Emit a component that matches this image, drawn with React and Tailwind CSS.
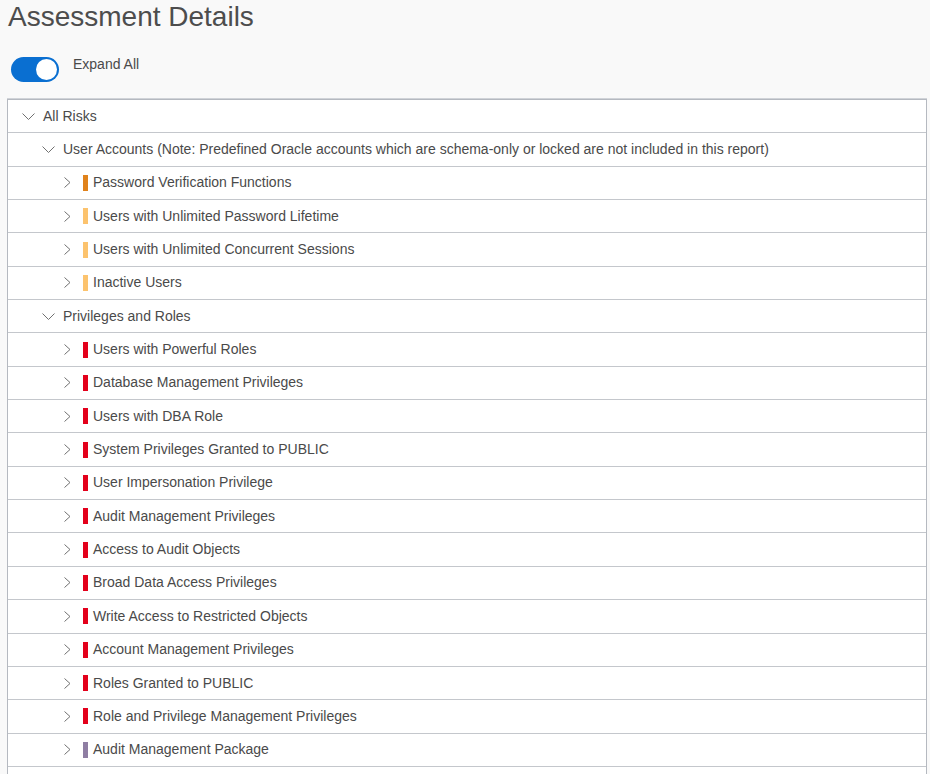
const ORANGE = "bg-[#e0821b]";
const LIGHT = "bg-[#fcc36e]";
const RED = "bg-[#e3001b]";
const PURPLE = "bg-[#8f7ea3]";

const TREE = [
  {
    label:
      "User Accounts (Note: Predefined Oracle accounts which are schema-only or locked are not included in this report)",
    items: [
      { label: "Password Verification Functions", color: ORANGE },
      { label: "Users with Unlimited Password Lifetime", color: LIGHT },
      { label: "Users with Unlimited Concurrent Sessions", color: LIGHT },
      { label: "Inactive Users", color: LIGHT },
    ],
  },
  {
    label: "Privileges and Roles",
    items: [
      { label: "Users with Powerful Roles", color: RED },
      { label: "Database Management Privileges", color: RED },
      { label: "Users with DBA Role", color: RED },
      { label: "System Privileges Granted to PUBLIC", color: RED },
      { label: "User Impersonation Privilege", color: RED },
      { label: "Audit Management Privileges", color: RED },
      { label: "Access to Audit Objects", color: RED },
      { label: "Broad Data Access Privileges", color: RED },
      { label: "Write Access to Restricted Objects", color: RED },
      { label: "Account Management Privileges", color: RED },
      { label: "Roles Granted to PUBLIC", color: RED },
      { label: "Role and Privilege Management Privileges", color: RED },
      { label: "Audit Management Package", color: PURPLE },
    ],
  },
];

// thin chevrons like the JET tree icons
const Down = ({ className }) => (
  <svg width="13" height="7" viewBox="0 0 13 7" className={className}>
    <polyline points="0.5,0.5 6.5,6.5 12.5,0.5" fill="none" stroke="#707070" strokeWidth="1" />
  </svg>
);

const Right = ({ className }) => (
  <svg width="7" height="11" viewBox="0 0 7 11" className={className}>
    <polyline points="0.5,0.5 6,5.5 0.5,10.5" fill="none" stroke="#707070" strokeWidth="1" />
  </svg>
);

function Row({ children }) {
  return (
    <div className="flex items-center h-[33.35px] border-b border-[#c4c7cc] text-[14px] text-[#4a4a4a] whitespace-nowrap">
      {children}
    </div>
  );
}

export default function App() {
  return (
    <div
      className="min-h-screen bg-[#f9f9f9] overflow-hidden"
      style={{ fontFamily: '"Liberation Sans", Arial, sans-serif' }}
    >
      <h1 className="pl-2 text-[28px] leading-[34px] text-[#4d4d4d]">Assessment Details</h1>

      <div className="flex items-start mt-[23px] pl-[11px]">
        <div className="w-[48px] h-[25px] rounded-full bg-[#0a6fd1] flex items-center justify-end pr-[2px]">
          <div className="w-[21px] h-[21px] rounded-full bg-white" />
        </div>
        <span className="ml-[14px] -mt-[3px] text-[14px] text-[#4a4a4a]">Expand All</span>
      </div>

      <div className="ml-[7px] w-[920px] mt-[17px] bg-white border border-[#b5b9c0] border-b-0 shadow-[0_-1px_0_#d0d3d8]">
        <Row>
          <Down className="ml-[14px]" />
          <span className="ml-[8px]">All Risks</span>
        </Row>
        {TREE.map((group) => (
          <div key={group.label}>
            <Row>
              <Down className="ml-[34px]" />
              <span className="ml-[8px]">{group.label}</span>
            </Row>
            {group.items.map((item) => (
              <Row key={item.label}>
                <Right className="ml-[56px]" />
                <span className={`ml-[12px] w-[5px] h-[16px] ${item.color}`} />
                <span className="ml-[5px]">{item.label}</span>
              </Row>
            ))}
          </div>
        ))}
        <Row />
      </div>
    </div>
  );
}
